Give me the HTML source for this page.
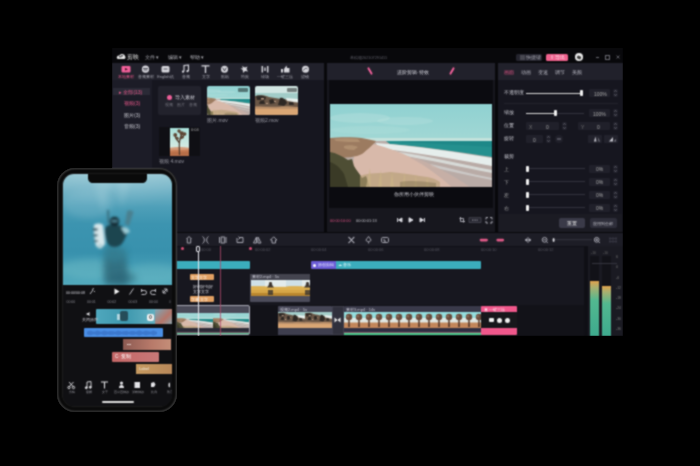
<!DOCTYPE html>
<html><head><meta charset="utf-8">
<style>
html,body{margin:0;padding:0;background:#000;width:700px;height:466px;overflow:hidden;font-family:"Liberation Sans",sans-serif;}
.a{position:absolute;}
.t{position:absolute;color:#b8b8c2;font-size:5px;line-height:6px;white-space:nowrap;}
svg{position:absolute;overflow:hidden}
#root{position:absolute;left:0;top:0;width:700px;height:466px;filter:url(#gblur)}
</style></head><body><svg width="0" height="0" style="position:absolute"><filter id="gblur" x="-1%" y="-1%" width="102%" height="102%" color-interpolation-filters="sRGB"><feConvolveMatrix order="3" kernelMatrix="1 2 1 2 6 2 1 2 1" preserveAlpha="true"/></filter></svg><div id="root">

<svg width="0" height="0" style="position:absolute">
 <defs>
  <linearGradient id="sky1" x1="0" y1="0" x2="0" y2="1">
   <stop offset="0" stop-color="#8fd1d1"/><stop offset=".6" stop-color="#a9dad6"/><stop offset="1" stop-color="#c4e4de"/>
  </linearGradient>
  <symbol id="beach" viewBox="0 0 162 83" preserveAspectRatio="none">
   <rect width="162" height="83" fill="url(#sky1)"/>
   <ellipse cx="30" cy="14" rx="30" ry="5" fill="#d8eeea" opacity=".22"/><ellipse cx="75" cy="17" rx="28" ry="4" fill="#d8eeea" opacity=".18"/><ellipse cx="40" cy="26" rx="40" ry="4" fill="#d8eeea" opacity=".12"/>
   <path d="M0 34 L162 34 L162 37 L0 37Z" fill="#c4e2dc"/>
   <path d="M44 37 L162 37 L162 83 L0 83 L0 37Z" fill="#b9aba6"/>
   <path d="M56 37 L162 37 L162 53 C135 49 100 43 60 40Z" fill="#24908e"/>
   <path d="M70 37 L162 37 L162 43 C130 41 100 39 72 38Z" fill="#1c8486" opacity=".7"/>
   <path d="M46 39 C90 42 130 49 162 54 L162 62 C130 56 95 50 48 44Z" fill="#e6eeec"/>
   <path d="M62 47 C100 52 130 60 162 66 L162 69 C130 63 100 56 64 50Z" fill="#dfe6e4" opacity=".8"/>
   <path d="M100 60 C120 64 140 70 162 74 L162 76 C140 72 120 67 102 63Z" fill="#d8dedd" opacity=".6"/>
   <path d="M44 40 C58 44 70 48 82 54 C96 62 110 72 122 83 L20 83 L24 52Z" fill="#d8b9aa"/><path d="M80 54 C96 62 110 72 122 83 L140 83 C124 72 106 62 86 54Z" fill="#c9b0a6" opacity=".8"/>
   <path d="M0 34 C8 33 18 33 26 33.5 C34 34 40 35.5 46 37 C44 40 38 45 32 50 C26 53 18 54 0 54Z" fill="#9c7b60"/>
   <path d="M4 35 C12 34 20 34 28 35 L30 38 C22 38 14 38 6 37Z M14 42 C18 41 24 41 28 43 L24 46 C20 46 16 45 14 44Z" fill="#b89878" opacity=".7"/>
   <path d="M0 48 C6 49 12 52 18 56 L22 55 L24 62 C26 66 30 70 32 74 L36 72 L40 83 L0 83Z" fill="#4e4e34"/>
   <path d="M0 58 C6 60 10 64 14 70 L18 83 L0 83Z" fill="#3a3a26"/>
   <path d="M30 72 C40 68 50 70 60 68 C70 69 80 70 90 72 C100 73 106 75 110 78 L110 83 L30 83Z" fill="#b49c72" opacity=".6"/>
   <path d="M36 83 L40 64 L41 83Z M48 83 L51 66 L52 83Z M60 83 L62 68 L64 83Z M72 83 L75 68 L75 83Z M84 83 L86 70 L87 83Z M96 83 L97 72 L99 83Z" fill="#cbb488" opacity=".7"/>
   <path d="M70 78 C80 76 90 77 106 79 L106 83 L70 83Z" fill="#6a6040" opacity=".35"/>
  </symbol>
  <filter id="soft" x="-5%" y="-5%" width="110%" height="110%"><feGaussianBlur stdDeviation=".7"/></filter>
  <symbol id="rocks" viewBox="0 0 43 29" preserveAspectRatio="none">
   <rect width="43" height="29" fill="#d2e6e3"/>
   <rect y="7" width="43" height="6" fill="#a2ccc8"/>
   <path d="M0 17 L43 17 L43 29 L0 29Z" fill="#d9a674"/>
   <path d="M0 10 C5 9 10 9 14 11 C18 12 22 12 26 13 C32 13 36 15 43 16 L43 21 C36 21 30 20 24 21 C16 22 8 20 0 21Z" fill="#6a5646"/>
   <path d="M1 10 C5 9 9 10 11 11 L10 14 L2 14Z M25 12 C28 11 31 14 32 17 L29 20 L23 19Z M14 14 L18 13 L20 17 L15 18Z M5 15 L9 14 L10 18 L4 18Z M34 16 L38 16 L39 19 L34 19Z" fill="#2e2824"/>
   <path d="M6 12 h3 v1.5 h-3z M19 15 h2 v1 h-2z M11 17 h2 v1 h-2z" fill="#b89c86"/>
   <path d="M31 12 C35 12 39 13 43 13 L43 16.5 C38 16.5 35 15 32 15Z" fill="#eef4f2" opacity=".85"/>
   <path d="M0 20 C10 21 20 20 43 21 L43 23 L0 23Z" fill="#a88466" opacity=".6"/>
  </symbol>
  <symbol id="tree" viewBox="0 0 20 29" preserveAspectRatio="none">
   <defs><linearGradient id="tsky" x1="0" y1="0" x2="0" y2="1"><stop offset="0" stop-color="#a8e0da"/><stop offset="1" stop-color="#e8eee6"/></linearGradient></defs>
   <rect width="20" height="29" fill="url(#tsky)"/>
   <path d="M0 20 C6 19 14 19 20 20 L20 29 L0 29Z" fill="#d49a78"/><path d="M0 23 C6 22 14 23 20 22 L20 29 L0 29Z" fill="#c47a52"/>
   <path d="M0 25 C6 24 14 25 20 24 L20 29 L0 29Z" fill="#b06a44" opacity=".7"/>
   <g stroke="#4e3a2c" stroke-width="1.3" fill="none" stroke-linecap="round">
    <path d="M10 27 C10 22 9.5 18 10 14 C10.5 11 11 9 12 7"/>
    <path d="M10 15 C8 13 6 11 5.5 8"/>
    <path d="M11 11 C13 10 14.5 9 15 6.5"/>
    <path d="M12 7 C11 5 10 4 9.5 3"/>
   </g>
   <g fill="#5e4634">
    <circle cx="5.5" cy="7" r="2"/><circle cx="9.5" cy="3" r="1.8"/><circle cx="12.5" cy="5.5" r="2.2"/><circle cx="15.5" cy="6" r="1.8"/><circle cx="7.5" cy="10.5" r="1.6"/><circle cx="13" cy="9.5" r="1.5"/>
   </g>
  </symbol>
  <symbol id="desert" viewBox="0 0 37 16" preserveAspectRatio="none">
   <rect width="37" height="16" fill="#d6a646"/>
   <rect width="37" height="6.5" fill="#cfe0e6"/>
   <rect x="14" y="0" width="21" height="7.5" fill="#eef2f0" opacity=".65"/>
   <path d="M0 6.5 C10 5.5 20 7.5 37 7 L37 10 L0 10Z" fill="#ddb050"/>
   <path d="M0 13 L37 13 L37 16 L0 16Z" fill="#b8862e"/>
   <path d="M18.5 2 L20.5 2 L21.5 5.5 L23 7.5 L16 7.5 L17.5 5.5Z" fill="#3e3630"/>
   <path d="M17 10 h5 v5 h-5z" fill="#3a3430" opacity=".8"/>
  </symbol>
  <symbol id="trees" viewBox="0 0 10 16" preserveAspectRatio="none">
   <rect width="10" height="16" fill="#dfe8e4"/>
   <rect width="10" height="6" fill="#94dcdc"/>
   <rect y="10.5" width="10" height="5.5" fill="#c2865a"/>
   <path d="M4.3 7 L5.7 7 L6 15 L4 15Z" fill="#5e4032"/>
   <circle cx="5" cy="5" r="3.2" fill="#6a4a3a"/>
   <circle cx="3.8" cy="4.2" r="1.2" fill="#8a6a58"/>
  </symbol>
  <radialGradient id="uw" cx="0.5" cy="0" r="1">
   <stop offset="0" stop-color="#bfe3ea"/><stop offset=".45" stop-color="#6ab9cc"/><stop offset=".8" stop-color="#3d9db6"/><stop offset="1" stop-color="#56b0c2"/>
  </radialGradient>
  <linearGradient id="meter" x1="0" y1="0" x2="0" y2="1">
   <stop offset="0" stop-color="#e0a248"/><stop offset=".45" stop-color="#4fb796"/><stop offset="1" stop-color="#3aa88f"/>
  </linearGradient>
 </defs>
</svg>

<!-- ============ WINDOW ============ -->
<div class="a" style="left:112px;top:48px;width:511px;height:288px;background:#08080b;box-shadow:inset 0 .5px 0 #121216"></div>

<!-- title bar -->
<svg style="left:115.5px;top:53.3px" width="10" height="7" viewBox="0 0 10 7"><path d="M1 5.5 C0 3.5 2 2 3.5 2.5 C4.5 .3 8.5 .5 9 3 C10 4.5 9.5 6 8 6 L2 6Z" fill="#e8e8e8"/><path d="M3 3.8 h2.5 M5 2.8 h2" stroke="#08080b" stroke-width=".9"/></svg>
<div class="t" style="left:127px;top:54px;color:#e0e0e0;font-size:6px">剪映</div>
<div class="t" style="left:145px;top:54px;color:#b0b0b8">文件 ▾</div>
<div class="t" style="left:168px;top:54px;color:#b0b0b8">编辑 ▾</div>
<div class="t" style="left:190px;top:54px;color:#b0b0b8">帮助 ▾</div>
<div class="t" style="left:350px;top:55px;color:#5e5e68;font-size:3.8px">草稿箱202107291411</div>
<div class="a" style="left:516px;top:53.7px;width:26px;height:7.7px;background:#24242e;border-radius:1.5px"></div>
<div class="t" style="left:520px;top:54.5px;color:#a0a0aa;font-size:4.5px">▤ 快捷键</div>
<div class="a" style="left:546.2px;top:53.7px;width:21.5px;height:7.7px;background:#f0628e;border-radius:1.5px"></div>
<div class="t" style="left:550px;top:54.5px;color:#ffe6ee;font-size:4.5px">⇧ 导出</div>
<div class="a" style="left:574.8px;top:53px;width:8.2px;height:8.2px;background:#ececec;border-radius:50%"></div>
<div class="a" style="left:576.8px;top:55.5px;width:4px;height:3px;background:#3a3a3a;border-radius:1px;transform:rotate(25deg)"></div>
<div class="a" style="left:595.5px;top:57px;width:3px;height:.8px;background:#6a6a72"></div>
<div class="a" style="left:605.3px;top:55.3px;width:2.4px;height:2.4px;border:.8px solid #6a6a72"></div>
<svg style="left:615.5px;top:55px" width="4" height="4" viewBox="0 0 4 4"><path d="M.5 .5 L3.5 3.5 M3.5 .5 L.5 3.5" stroke="#6a6a72" stroke-width=".8"/></svg>

<!-- ============ MEDIA PANEL ============ -->
<div class="a" style="left:112px;top:63px;width:212px;height:169px;background:#16161f"></div>
<div class="a" style="left:112px;top:63px;width:212px;height:17px;background:#21212b"></div>
<div class="a" style="left:112px;top:80px;width:40px;height:152px;background:#1c1c27"></div>
<!-- toolbar icons -->
<svg style="left:112px;top:63px" width="212" height="17" viewBox="0 0 212 17">
 <g fill="none" stroke="#dcdce2" stroke-width="1.1">
  <rect x="9.5" y="3" width="9" height="6.5" rx="1" fill="#f2609a" stroke="none"/>
  <path d="M13 5 L16 6.2 L13 7.5Z" fill="#3a1020" stroke="none"/>
  <circle cx="33.5" cy="6.2" r="3.6" fill="#d6d6dc" stroke="none"/>
  <path d="M31 5.5h5 M31.5 7h4" stroke="#33333d" stroke-width=".8"/>
  <rect x="49.5" y="3" width="8" height="6.5" rx="1.5" fill="#d6d6dc" stroke="none"/>
  <path d="M51.5 6 h4" stroke="#33333d" stroke-width=".8"/>
  <path d="M72 8.5 V2.5 L76.5 2 V8" /><circle cx="71" cy="8.7" r="1.1" fill="#dcdce2" stroke="none"/><circle cx="75.5" cy="8.2" r="1.1" fill="#dcdce2" stroke="none"/>
  <path d="M89.5 2.8 h8 M93.5 2.8 V10" stroke-width="1.3"/>
  <circle cx="112.5" cy="6.3" r="3.5" fill="#d6d6dc" stroke="none"/><path d="M110.8 4.8 L112.5 8 L114.2 4.8" stroke="#33333d" stroke-width=".9"/>
  <path d="M130 3 L133 4.5 L135.5 3.5 L134.5 6 L136 8.5 L133 8 L131 10 L130.8 7 L128.5 5.5 L131 5.2Z" fill="#d6d6dc" stroke="none"/>
  <path d="M150.3 3 V9.5 M155.7 3 V9.5" stroke-width="1.4"/><rect x="152.3" y="4.5" width="1.4" height="3.5" fill="#d6d6dc" stroke="none"/>
  <path d="M169 6 h2 v3.5 h-2z M172 6 L174.5 2.5 L175 5 h2.5 v4.5 h-5.5z" fill="#d6d6dc" stroke="none"/>
  <circle cx="193.5" cy="6.2" r="3.5" fill="#d6d6dc" stroke="none"/><path d="M191.5 7.5 C192.5 5 194.5 5 195.5 6" stroke="#33333d" stroke-width=".8"/>
 </g>
 <g font-size="3.8" fill="#a4a4ae" text-anchor="middle" font-family="Liberation Sans">
  <text x="14" y="15" fill="#e8588a">本地素材</text>
  <text x="33.5" y="15">音频素材</text>
  <text x="53.5" y="15">English机</text>
  <text x="73.5" y="15">音频</text>
  <text x="93.5" y="15">文字</text>
  <text x="112.5" y="15">贴纸</text>
  <text x="132.5" y="15">特效</text>
  <text x="153" y="15">转场</text>
  <text x="173" y="15">一键三连</text>
  <text x="193" y="15">滤镜</text>
 </g>
</svg>

<div class="a" style="left:113px;top:88px;width:37px;height:7px;background:#2a2a36"></div>
<div class="t" style="left:119px;top:89px;color:#e8588a">▸ 全部(13)</div>
<div class="t" style="left:124px;top:100px;color:#e8588a">视频(3)</div>
<div class="t" style="left:124px;top:112px;color:#c8c8d0">图片(3)</div>
<div class="t" style="left:124px;top:123px;color:#c8c8d0">音频(3)</div>

<!-- import box -->
<div class="a" style="left:158px;top:86px;width:43px;height:29px;background:#22222c;border-radius:2px"></div>
<div class="a" style="left:167px;top:95px;width:5px;height:5px;background:#f0609a;border-radius:50%"></div>
<div class="t" style="left:174.5px;top:94.5px;color:#d6d6de;font-size:4.6px">导入素材</div>
<div class="t" style="left:165px;top:102px;color:#74747e;font-size:4px;word-spacing:3px">视频 图片 音频</div>

<!-- thumbs -->
<svg style="left:206.5px;top:86px;border-radius:2px" width="43" height="29"><use href="#beach" x="-7" width="57" height="29"/></svg>
<div class="a" style="left:238px;top:88px;width:10px;height:4px;background:rgba(0,0,0,.45);border-radius:1px"></div>
<div class="t" style="left:207px;top:117px;color:#9a9aa4">图片.mov</div>
<svg style="left:255px;top:86px;border-radius:2px" width="43" height="29"><use href="#rocks" width="43" height="29"/></svg>
<div class="a" style="left:287px;top:88px;width:10px;height:4px;background:rgba(0,0,0,.45);border-radius:1px"></div>
<div class="t" style="left:255px;top:117px;color:#9a9aa4">视频2.mov</div>
<div class="a" style="left:159px;top:127px;width:41px;height:29px;background:#0f0f14"></div>
<svg style="left:170px;top:127.5px" width="19" height="28.5"><use href="#tree" width="19" height="28.5"/></svg>
<div class="t" style="left:191px;top:127px;color:#aaa;font-size:4px">0:04</div>
<div class="t" style="left:159px;top:158px;color:#9a9aa4">视频 4.mov</div>

<!-- ============ PREVIEW PANEL ============ -->
<div class="a" style="left:327px;top:63px;width:168px;height:169px;background:#17171e"></div>
<div class="a" style="left:327px;top:63px;width:168px;height:17px;background:#21212b"></div>
<div class="a" style="left:369px;top:67px;width:2px;height:8px;background:#f0609a;transform:rotate(-30deg);border-radius:1px"></div>
<div class="a" style="left:451px;top:67px;width:2px;height:8px;background:#f0609a;transform:rotate(30deg);border-radius:1px"></div>
<div class="t" style="left:397px;top:69px;color:#d8d8e0">进阶剪辑·特效</div>
<div class="a" style="left:329px;top:80px;width:164px;height:128px;background:#0b0b10"></div>
<svg style="left:330px;top:104px" width="162" height="83"><use href="#beach" width="162" height="83"/></svg>
<div class="t" style="left:394px;top:191px;color:#d0d0d8">你所用小伙伴剪映</div>
<div class="t" style="left:330px;top:217.5px;color:#d85080;font-size:3.9px">00:00:10:00</div>
<div class="t" style="left:356px;top:217.5px;color:#c0c0c8;font-size:3.9px">00:00:01:13</div>
<svg style="left:396px;top:216px" width="30" height="8" viewBox="0 0 30 8"><path d="M1.5 2v4 M6 2 L2.5 4 L6 6Z M13 1.8 L17 4 L13 6.2Z M24 2 L27.5 4 L24 6Z M28.5 2v4" stroke="#e0e0e6" stroke-width=".9" fill="#e0e0e6"/></svg>
<svg style="left:457px;top:216px" width="36" height="8" viewBox="0 0 36 8"><path d="M2.5 2.5h4v4 M3.5 1v4.5h4.5" stroke="#c8c8d0" fill="none" stroke-width=".8"/><rect x="12" y="1.8" width="12" height="4.6" fill="#24242e" stroke="#5a5a66" stroke-width=".6"/><path d="M15 4.1h6" stroke="#8a8a94" stroke-width="1.2" stroke-dasharray="1 .6"/><path d="M29 3.5V1.5h2 M33 1.5h2v2 M35 5v2h-2 M31 7h-2V5" stroke="#c8c8d0" fill="none" stroke-width=".8"/></svg>

<!-- ============ RIGHT PANEL ============ -->
<div class="a" style="left:498px;top:63px;width:125px;height:169px;background:#16161f"></div>
<div class="a" style="left:498px;top:63px;width:125px;height:17px;background:#21212b"></div>
<div class="t" style="left:504px;top:69px;color:#e8588a">画面</div>
<div class="t" style="left:521px;top:69px">动画</div>
<div class="t" style="left:538px;top:69px">变速</div>
<div class="t" style="left:555px;top:69px">调节</div>
<div class="t" style="left:572px;top:69px">美颜</div>

<div class="t" style="left:504px;top:89.7px;color:#c8c8d0;font-size:4.5px">不透明度</div>
<div class="a" style="left:526px;top:93px;width:56px;height:1px;background:#d8d8d8"></div>
<div class="a" style="left:580px;top:90px;width:3px;height:6px;background:#f0f0f0;border-radius:1px"></div>
<div class="a" style="left:589px;top:89px;width:21px;height:8px;background:#20202a;border-radius:1px"></div>
<div class="t" style="left:594px;top:90.5px;color:#aaa">100%</div>
<svg style="left:613.0px;top:89.0px" width="5" height="8" viewBox="0 0 5 8"><rect x=".2" y=".2" width="4.6" height="3.6" fill="#22222c"/><rect x=".2" y="4.2" width="4.6" height="3.6" fill="#22222c"/><path d="M1.3 2.7 L2.5 1.4 L3.7 2.7 M1.3 5.3 L2.5 6.6 L3.7 5.3" stroke="#8a8a94" stroke-width=".6" fill="none"/></svg>
<div class="a" style="left:504px;top:103px;width:114px;height:1px;background:#22222c"></div>

<div class="t" style="left:504px;top:109.7px;color:#c8c8d0;font-size:4.5px">缩放</div>
<div class="a" style="left:526px;top:113px;width:30px;height:1px;background:#d8d8d8"></div>
<div class="a" style="left:556px;top:113px;width:28px;height:1px;background:#33333d"></div>
<div class="a" style="left:554px;top:110px;width:3px;height:6px;background:#f0f0f0;border-radius:1px"></div>
<div class="a" style="left:589px;top:109px;width:21px;height:8px;background:#20202a;border-radius:1px"></div>
<div class="t" style="left:593px;top:110.5px;color:#aaa">100%</div>
<svg style="left:613.0px;top:109.0px" width="5" height="8" viewBox="0 0 5 8"><rect x=".2" y=".2" width="4.6" height="3.6" fill="#22222c"/><rect x=".2" y="4.2" width="4.6" height="3.6" fill="#22222c"/><path d="M1.3 2.7 L2.5 1.4 L3.7 2.7 M1.3 5.3 L2.5 6.6 L3.7 5.3" stroke="#8a8a94" stroke-width=".6" fill="none"/></svg>

<div class="t" style="left:504px;top:122.7px;color:#c8c8d0;font-size:4.5px">位置</div>
<div class="a" style="left:526px;top:122px;width:33px;height:8px;background:#20202a;border-radius:1px"></div>
<div class="t" style="left:529px;top:123.5px;color:#777">X</div>
<div class="t" style="left:546px;top:123.5px;color:#aaa">0</div>
<svg style="left:562.0px;top:122.0px" width="5" height="8" viewBox="0 0 5 8"><rect x=".2" y=".2" width="4.6" height="3.6" fill="#22222c"/><rect x=".2" y="4.2" width="4.6" height="3.6" fill="#22222c"/><path d="M1.3 2.7 L2.5 1.4 L3.7 2.7 M1.3 5.3 L2.5 6.6 L3.7 5.3" stroke="#8a8a94" stroke-width=".6" fill="none"/></svg>
<div class="a" style="left:578px;top:122px;width:32px;height:8px;background:#20202a;border-radius:1px"></div>
<div class="t" style="left:581px;top:123.5px;color:#777">Y</div>
<div class="t" style="left:597px;top:123.5px;color:#aaa">0</div>
<svg style="left:613.0px;top:122.0px" width="5" height="8" viewBox="0 0 5 8"><rect x=".2" y=".2" width="4.6" height="3.6" fill="#22222c"/><rect x=".2" y="4.2" width="4.6" height="3.6" fill="#22222c"/><path d="M1.3 2.7 L2.5 1.4 L3.7 2.7 M1.3 5.3 L2.5 6.6 L3.7 5.3" stroke="#8a8a94" stroke-width=".6" fill="none"/></svg>

<div class="t" style="left:504px;top:135.7px;color:#c8c8d0;font-size:4.5px">旋转</div>
<div class="a" style="left:526px;top:135px;width:17px;height:8px;background:#20202a;border-radius:1px"></div>
<div class="t" style="left:533px;top:136.5px;color:#aaa">0</div>
<svg style="left:546.0px;top:135.0px" width="5" height="8" viewBox="0 0 5 8"><rect x=".2" y=".2" width="4.6" height="3.6" fill="#22222c"/><rect x=".2" y="4.2" width="4.6" height="3.6" fill="#22222c"/><path d="M1.3 2.7 L2.5 1.4 L3.7 2.7 M1.3 5.3 L2.5 6.6 L3.7 5.3" stroke="#8a8a94" stroke-width=".6" fill="none"/></svg>
<div class="a" style="left:555px;top:135px;width:8px;height:8px;background:#20202a;border-radius:50%"></div>
<div class="a" style="left:588px;top:135px;width:14px;height:8px;background:#22222c;border-radius:1px"></div>
<div class="a" style="left:604px;top:135px;width:14px;height:8px;background:#22222c;border-radius:1px"></div>
<svg style="left:555px;top:135px" width="63" height="8" viewBox="0 0 63 8">
 <path d="M2 4 h4" stroke="#9a9aa4" stroke-width=".8"/>
 <path d="M39 6.5 L40.5 1.5 L41.5 6.5Z" fill="#c8c8d0"/><path d="M42.5 1.5 L43.5 6.5 L45 6.5Z" fill="#7a7a84"/>
 <path d="M54 6.5 L58 2 V6.5Z" fill="#c8c8d0"/><path d="M58.5 6.5 L61 4 L61 6.5Z" fill="#7a7a84"/>
</svg>

<div class="t" style="left:504px;top:153.7px;color:#c8c8d0;font-size:4.5px">裁剪</div>
<div class="t" style="left:504px;top:166px;color:#aaa">上</div>
<div class="t" style="left:504px;top:179px;color:#aaa">下</div>
<div class="t" style="left:504px;top:192px;color:#aaa">左</div>
<div class="t" style="left:504px;top:205px;color:#aaa">右</div>
<div class="a" style="left:528px;top:168px;width:57px;height:1px;background:#33333d"></div>
<div class="a" style="left:528px;top:181px;width:57px;height:1px;background:#33333d"></div>
<div class="a" style="left:528px;top:194px;width:57px;height:1px;background:#33333d"></div>
<div class="a" style="left:528px;top:207px;width:57px;height:1px;background:#33333d"></div>
<div class="a" style="left:526px;top:165.5px;width:3px;height:6px;background:#f0f0f0;border-radius:1px"></div>
<div class="a" style="left:526px;top:178.5px;width:3px;height:6px;background:#f0f0f0;border-radius:1px"></div>
<div class="a" style="left:526px;top:191.5px;width:3px;height:6px;background:#f0f0f0;border-radius:1px"></div>
<div class="a" style="left:526px;top:204.5px;width:3px;height:6px;background:#f0f0f0;border-radius:1px"></div>
<div class="a" style="left:589px;top:164.5px;width:21px;height:8px;background:#20202a;border-radius:1px"></div>
<div class="a" style="left:589px;top:177.5px;width:21px;height:8px;background:#20202a;border-radius:1px"></div>
<div class="a" style="left:589px;top:190.5px;width:21px;height:8px;background:#20202a;border-radius:1px"></div>
<div class="a" style="left:589px;top:203.5px;width:21px;height:8px;background:#20202a;border-radius:1px"></div>
<div class="t" style="left:596px;top:166px;color:#aaa">0%</div>
<div class="t" style="left:596px;top:179px;color:#aaa">0%</div>
<div class="t" style="left:596px;top:192px;color:#aaa">0%</div>
<div class="t" style="left:596px;top:205px;color:#aaa">0%</div>
<svg style="left:613.0px;top:164.5px" width="5" height="8" viewBox="0 0 5 8"><rect x=".2" y=".2" width="4.6" height="3.6" fill="#22222c"/><rect x=".2" y="4.2" width="4.6" height="3.6" fill="#22222c"/><path d="M1.3 2.7 L2.5 1.4 L3.7 2.7 M1.3 5.3 L2.5 6.6 L3.7 5.3" stroke="#8a8a94" stroke-width=".6" fill="none"/></svg>
<svg style="left:613.0px;top:177.5px" width="5" height="8" viewBox="0 0 5 8"><rect x=".2" y=".2" width="4.6" height="3.6" fill="#22222c"/><rect x=".2" y="4.2" width="4.6" height="3.6" fill="#22222c"/><path d="M1.3 2.7 L2.5 1.4 L3.7 2.7 M1.3 5.3 L2.5 6.6 L3.7 5.3" stroke="#8a8a94" stroke-width=".6" fill="none"/></svg>
<svg style="left:613.0px;top:190.5px" width="5" height="8" viewBox="0 0 5 8"><rect x=".2" y=".2" width="4.6" height="3.6" fill="#22222c"/><rect x=".2" y="4.2" width="4.6" height="3.6" fill="#22222c"/><path d="M1.3 2.7 L2.5 1.4 L3.7 2.7 M1.3 5.3 L2.5 6.6 L3.7 5.3" stroke="#8a8a94" stroke-width=".6" fill="none"/></svg>
<svg style="left:613.0px;top:203.5px" width="5" height="8" viewBox="0 0 5 8"><rect x=".2" y=".2" width="4.6" height="3.6" fill="#22222c"/><rect x=".2" y="4.2" width="4.6" height="3.6" fill="#22222c"/><path d="M1.3 2.7 L2.5 1.4 L3.7 2.7 M1.3 5.3 L2.5 6.6 L3.7 5.3" stroke="#8a8a94" stroke-width=".6" fill="none"/></svg>
<div class="a" style="left:499px;top:213.5px;width:123px;height:18px;background:#1b1b23"></div>
<div class="a" style="left:559px;top:218px;width:26px;height:10px;background:#3a3a48;border-radius:2px"></div>
<div class="t" style="left:567px;top:220px;color:#ddd">重置</div>
<div class="a" style="left:590px;top:218px;width:27px;height:10px;background:#2e2e3a;border-radius:2px"></div>
<div class="t" style="left:592.5px;top:220.5px;color:#c4c4cc;font-size:4.3px">应用到全部</div>

<!-- ============ TIMELINE ============ -->
<div class="a" style="left:112px;top:233px;width:511px;height:103px;background:#17171f"></div>
<div class="a" style="left:112px;top:304.5px;width:472px;height:31.5px;background:#121218"></div>
<div class="a" style="left:112px;top:233px;width:511px;height:13px;background:#1d1d26"></div>
<div class="a" style="left:585px;top:246px;width:38px;height:90px;background:#1a1a22"></div>
<!-- timeline toolbar icons -->
<svg style="left:112px;top:233px" width="511" height="13" viewBox="0 0 511 13">
 <g fill="none" stroke="#a6a6b0" stroke-width="1">
  <path d="M74.5 6 L77 3.5 L79.5 6 M75.3 5.5 V10 H78.7 V5.5"/>
  <path d="M90.5 3.5 C93 5 93 9 90.5 10.5 M96.5 3.5 C94 5 94 9 96.5 10.5"/>
  <path d="M107.5 4 V10 M114 4 V10"/><rect x="109.3" y="4" width="3" height="6"/>
  <path d="M125 5 V9.5 H131 V4.5 H127.5"/><path d="M126.5 3.5 L128 5 L126.5 6.5" />
  <path d="M144.5 4 L141.5 10 H144.5Z M146 4 L149 10 H146Z"/>
  <path d="M158.5 7 L161.7 3.8 L164.9 7 L163.5 7 L163.5 10 L160 10 L160 7Z"/>
  <path d="M236.5 4 L239.4 7 L242.3 4 M236.5 10 L239.4 7.2 L242.3 10" stroke-width="1.1"/>
  <path d="M254 7 C254 9 259 9 259 7 L258 5.5 L256.6 3.5 L255 5.5Z M256.6 9 V10.5"/>
  <rect x="269.5" y="4.5" width="7" height="5" rx="1.2"/><path d="M272 6 V8 H274"/>
  <path d="M413 7 L415 5.8 V8.2Z M419 7 L417 5.8 V8.2Z M416 4 V10" stroke-width=".8" fill="#cfcfd6"/>
  <circle cx="432.6" cy="6.8" r="2.4"/><path d="M434.4 8.6 L435.8 10 M431.4 6.8 h2.4"/>
  <circle cx="484.7" cy="6.8" r="2.4"/><path d="M486.5 8.6 L487.9 10 M483.5 6.8 h2.4 M484.7 5.6 v2.4"/>
  <path d="M498 4 V10 M501 4 V10 M504 4 V10 M497 5.5 H505 M497 8.5 H505" stroke="#3a3a46" stroke-width=".8"/>
 </g>
 <rect x="443" y="6.4" width="37" height=".7" fill="#3c3c48"/>
 <ellipse cx="441.6" cy="7" rx="1" ry="2.1" fill="#e8e8ec"/>
 <g fill="#e25a88">
  <rect x="367.7" y="5.8" width="8.2" height="2.6" rx="1.3"/>
  <rect x="384.4" y="5.8" width="7.7" height="2.6" rx="1.3"/>
 </g>
</svg>
<!-- ruler -->
<div class="a" style="left:112px;top:246px;width:473px;height:1px;background:#101016"></div>
<div class="a" style="left:180.5px;top:246.5px;width:3px;height:3px;background:#e0507a;border-radius:50%"></div>
<div class="a" style="left:248.5px;top:246.5px;width:3px;height:3px;background:#e0507a;border-radius:50%"></div>
<div class="t" style="left:201px;top:246.5px;color:#55555f;font-size:4px">00:00</div>
<div class="t" style="left:255px;top:246.5px;color:#55555f;font-size:4px">00:00:02</div>
<div class="t" style="left:311px;top:246.5px;color:#55555f;font-size:4px">00:00:04</div>
<div class="t" style="left:368px;top:246.5px;color:#55555f;font-size:4px">00:00:06</div>
<div class="t" style="left:424px;top:246.5px;color:#55555f;font-size:4px">00:00:08</div>
<div class="t" style="left:481px;top:246.5px;color:#55555f;font-size:4px">00:00:10</div>
<div class="t" style="left:538px;top:246.5px;color:#55555f;font-size:4px">00:00:12</div>

<!-- sticker/text track -->
<div class="a" style="left:150px;top:261px;width:100px;height:8px;background:#3badbd;border-radius:1px"></div>
<div class="a" style="left:310.5px;top:261px;width:25px;height:8px;background:#6a5bd6;border-radius:1px 0 0 1px"></div>
<div class="a" style="left:313px;top:263.5px;width:3px;height:3px;background:#fff;border-radius:50%"></div>
<div class="t" style="left:318px;top:262px;color:#e8e8ff;font-size:4px">原创剪辑</div>
<div class="a" style="left:335.5px;top:261px;width:145.5px;height:8px;background:#3badbd;border-radius:0 1px 1px 0"></div>
<div class="t" style="left:338px;top:262px;color:#e0f6f8;font-size:4px">☁ 音乐</div>

<!-- text labels -->
<div class="a" style="left:189.5px;top:274px;width:24px;height:6px;background:#e2a062;border-radius:1px"></div>
<div class="t" style="left:191px;top:274.5px;color:#fff3e6;font-size:4px">文字文字</div>
<div class="t" style="left:193px;top:283.5px;color:#d8d8e0;font-size:4px;line-height:5px">好词好句好<br>文字文字</div>
<div class="a" style="left:189.5px;top:296px;width:24px;height:6px;background:#e2a062;border-radius:1px"></div>
<div class="t" style="left:191px;top:296.5px;color:#fff3e6;font-size:4px">字幕 文字</div>

<!-- desert clip -->
<div class="a" style="left:250px;top:273.7px;width:60px;height:28.3px;background:#4c4c5a;border-radius:1px"></div>
<div class="a" style="left:250px;top:273.7px;width:60px;height:6px;background:#44444f"></div>
<div class="t" style="left:252px;top:274px;color:#c8c8d4;font-size:4px">素材2.mp4 · 5s</div>
<svg style="left:250.5px;top:279.7px" width="59" height="16"><use href="#desert" x="0" width="37" height="16"/><use href="#desert" x="37" width="37" height="16"/></svg>

<!-- main track clip1 -->
<div class="a" style="left:150px;top:305px;width:100px;height:30px;background:#4a4a58;border:1px solid #a8a8b4;border-radius:2px;box-sizing:border-box"></div>
<svg style="left:151px;top:312.5px" width="98" height="15.5"><use href="#beach" x="-12" y="-2" width="37" height="18"/><use href="#beach" x="25" y="-2" width="37" height="18"/><use href="#beach" x="62" y="-2" width="37" height="18"/></svg>
<div class="a" style="left:151px;top:328px;width:98px;height:6px;background:#2a2a36"></div>
<div class="a" style="left:151px;top:331.5px;width:98px;height:1px;background:#7a5a6a"></div><div class="a" style="left:151px;top:332.5px;width:98px;height:1.8px;background:#4cc88e"></div>

<!-- clip2 -->
<div class="a" style="left:278px;top:306px;width:54px;height:28.5px;background:#464656;border-radius:1px"></div>
<div class="t" style="left:280px;top:306.5px;color:#c8c8d4;font-size:4px">视频2.mp4 · 5s</div>
<svg style="left:278px;top:312px" width="54" height="16"><use href="#rocks" x="0" y="-7" width="27" height="24"/><use href="#rocks" x="27" y="-7" width="27" height="24"/></svg>
<div class="a" style="left:278px;top:328px;width:54px;height:6.5px;background:#3e3e4e"></div>

<!-- transition -->
<div class="a" style="left:332px;top:306px;width:11.5px;height:28.5px;background:#30303c;box-shadow:inset 0 0 0 .6px #4a4a58"></div>
<svg style="left:334px;top:317px" width="7" height="6" viewBox="0 0 7 6"><path d="M0.5 0.5 L3.5 3 L0.5 5.5Z M6.5 0.5 L3.5 3 L6.5 5.5Z" fill="#f0f0f0"/></svg>

<!-- clip3 -->
<div class="a" style="left:343.5px;top:306px;width:138px;height:28.5px;background:#3a3a4a;border-radius:1px"></div>
<div class="t" style="left:346px;top:306.5px;color:#c8c8d4;font-size:4px">素材3.mp4 · 14s</div>
<svg style="left:343.5px;top:312px" width="138" height="16"><use href="#trees" x="0" width="10" height="16"/><use href="#trees" x="10" width="10" height="16"/><use href="#trees" x="20" width="10" height="16"/><use href="#trees" x="30" width="10" height="16"/><use href="#trees" x="40" width="10" height="16"/><use href="#trees" x="50" width="10" height="16"/><use href="#trees" x="60" width="10" height="16"/><use href="#trees" x="70" width="10" height="16"/><use href="#trees" x="80" width="10" height="16"/><use href="#trees" x="90" width="10" height="16"/><use href="#trees" x="100" width="10" height="16"/><use href="#trees" x="110" width="10" height="16"/><use href="#trees" x="120" width="10" height="16"/><use href="#trees" x="130" width="10" height="16"/></svg>
<div class="a" style="left:343.5px;top:328px;width:138px;height:7px;background:#2e2e42"></div>
<div class="a" style="left:343.5px;top:331.5px;width:138px;height:1px;background:#8a5a6a"></div>
<div class="a" style="left:343.5px;top:332.5px;width:138px;height:2.5px;background:#4ccc8e"></div>

<!-- pink clip -->
<div class="a" style="left:481px;top:306px;width:36px;height:29px;background:#f0578b;border-radius:1px"></div>
<div class="a" style="left:481px;top:312px;width:36px;height:16px;background:#17171b"></div>
<div class="t" style="left:484px;top:306.5px;color:#ffe8f0;font-size:4px">▣ 一键三连</div>
<div class="a" style="left:488.5px;top:318px;width:5px;height:4px;background:#f2f2f2;border-radius:1px"></div>
<div class="a" style="left:496.5px;top:317.5px;width:5px;height:5px;background:#f2f2f2;border-radius:50%"></div>
<div class="a" style="left:504.5px;top:317.5px;width:5px;height:5px;background:#f2f2f2;border-radius:50%"></div>

<!-- playhead -->
<div class="a" style="left:220px;top:246px;width:1px;height:90px;background:#b24a6c;opacity:.8"></div>
<div class="a" style="left:198px;top:250px;width:1px;height:86px;background:#e8e8ee"></div>
<div class="a" style="left:196px;top:246px;width:4px;height:6px;border:1px solid #e8e8ee;border-radius:1px;box-sizing:border-box;background:#1d1d26"></div>

<!-- meters -->
<div class="a" style="left:584px;top:246px;width:4px;height:90px;background:#0f0f15"></div>
<div class="a" style="left:590px;top:256px;width:9px;height:80px;background:#121218"></div><div class="a" style="left:601.5px;top:256px;width:9px;height:80px;background:#121218"></div><div class="a" style="left:592px;top:263px;width:25px;height:.6px;background:#34343e"></div>
<div class="a" style="left:590px;top:280.5px;width:9px;height:55px;background:linear-gradient(#e0a24c,#a8b070 12%,#52b890 35%,#3eaa8e)"></div>
<div class="a" style="left:601.5px;top:286px;width:9px;height:49.5px;background:linear-gradient(#e0a24c,#a8b070 12%,#52b890 35%,#3eaa8e)"></div>
<div class="t" style="left:591px;top:250px;color:#666;font-size:3.5px">-10</div>
<div class="t" style="left:603px;top:250px;color:#666;font-size:3.5px">-10</div>
<div class="t" style="left:616px;top:252px;color:#777;font-size:3.5px;line-height:10.3px">6<br>0<br>-6<br>-12<br>-18<br>-24<br>-30<br>-36</div>



<!-- ============ PHONE ============ -->
<div class="a" style="left:57.3px;top:167.7px;width:119.4px;height:244.8px;border-radius:18px;background:#0a0a0a;box-shadow:inset 0 0 0 1px #424242, inset 0 0 0 1.8px #1a1a1a, inset 0 0 0 5px #0a0a0a, inset 0 0 0 5.8px #222"></div>
<div class="a" style="left:63px;top:173.5px;width:108.5px;height:232px;border-radius:11px;background:#101013;overflow:hidden">
 <svg style="left:0;top:0" width="109" height="111" viewBox="0 0 109 111">
  <defs>
   <linearGradient id="uwg" x1="0" y1="0" x2="0" y2="1">
    <stop offset="0" stop-color="#98c8d4"/><stop offset=".12" stop-color="#7cb8ca"/><stop offset=".3" stop-color="#4e9fb8"/><stop offset=".45" stop-color="#3c94b0"/><stop offset=".7" stop-color="#3891ad"/><stop offset=".85" stop-color="#449db5"/><stop offset="1" stop-color="#52a9bc"/>
   </linearGradient>
   <radialGradient id="uwr" cx="0.5" cy="0" r="0.6">
    <stop offset="0" stop-color="#d0e8ee" stop-opacity=".15"/><stop offset="1" stop-color="#d0e8ee" stop-opacity="0"/>
   </radialGradient>
   <filter id="bl1" x="-50%" y="-50%" width="200%" height="200%"><feGaussianBlur stdDeviation="1.1"/></filter>
   <filter id="bl2" x="-50%" y="-50%" width="200%" height="200%"><feGaussianBlur stdDeviation="3"/></filter>
  </defs>
  <rect width="109" height="111" fill="url(#uwg)"/>
  <rect width="109" height="60" fill="url(#uwr)"/>
  <ellipse cx="30" cy="95" rx="35" ry="10" fill="#80c8cc" opacity=".35" filter="url(#bl2)"/><ellipse cx="90" cy="100" rx="30" ry="10" fill="#80c8cc" opacity=".3" filter="url(#bl2)"/><ellipse cx="25" cy="30" rx="25" ry="14" fill="#a8d2de" opacity=".2" filter="url(#bl2)"/><path d="M44 74 C50 72 58 74 62 78 C64 90 66 100 64 111 L42 111 C40 100 40 86 44 74Z" fill="#2a6474" opacity=".8" filter="url(#bl2)"/><ellipse cx="60" cy="104" rx="14" ry="6" fill="#2a6474" opacity=".5" filter="url(#bl2)"/><path d="M30 6 L40 40 L48 6Z M55 4 L58 36 L68 4Z" fill="#c8e4ea" opacity=".18" filter="url(#bl2)"/>
  <ellipse cx="52" cy="80" rx="12" ry="8" fill="#3a8ea2" opacity=".5" filter="url(#bl2)"/>
  <g filter="url(#bl1)">
   <path d="M42 56 C42 51 47 50 52 51 C58 51 63 53 65 58 L63 62 C61 66 60 70 56 72 C52 74 47 73 45 70 C43 66 42 61 42 56Z" fill="#1c4450"/>
   <path d="M58 54 C62 52 66 54 67 58 L62 60Z" fill="#9ccad4"/>
   <circle cx="51.5" cy="47.5" r="4.8" fill="#142e38"/>
   <path d="M48.5 46 h6 v2.2 h-6z" fill="#4e8494"/>
   <path d="M62 50 L64 37 C66 35.5 69 36 70.5 38 L66 52Z" fill="#4a8090"/>
   <path d="M44 36 L46 36 L46.5 50 L44.5 50Z" fill="#3a7080"/>
   <path d="M31 51 C33 49 38 49 40 51 L42 69 C42 73 36 75 33 72 L31 61Z" fill="#d8e8ec"/>
   <path d="M30 54 h4.5 v3 h-4.5z M30.5 60 h4 v2.5 h-4z M31 66 h4 v2 h-4z" fill="#2a5a68"/>
   <circle cx="37" cy="72" r="2.6" fill="#b8d4da"/>
  </g>
  <path d="M25 0 H84 V4 C84 7 82 9 79 9 H30 C27 9 25 7 25 4Z" fill="#0a0a0a"/>
 </svg>
</div>
<!-- phone UI -->
<div class="t" style="left:66px;top:289.5px;color:#d0d0d8;font-size:3.6px">00:00/00:08</div>
<svg style="left:63px;top:287px" width="109" height="10" viewBox="0 0 109 10">
 <g stroke="#d0d0d6" stroke-width=".9" fill="none">
  <path d="M27 7 L30 3 M29 2.5 L31 1.5 M31 4 L32 5"/>
  <path d="M51.5 1.5 L56.5 4.5 L51.5 7.5Z" fill="#f4f4f4" stroke="none"/>
  <path d="M66.5 7.5 L70.5 1.5"/>
  <path d="M78.5 3.5 h3 a2 2 0 0 1 0 4 h-3 M78.5 2 v3"/>
  <path d="M92.5 3.5 h-3 a2 2 0 0 0 0 4 h3 M92.5 2 v3"/>
  <path d="M100 6 L104 2 M100 3 v3 h3 M104 5 v-3 h-3"/>
 </g>
</svg>
<div class="t" style="left:66.5px;top:298.5px;color:#85858d;font-size:3.5px">00:00</div><div class="t" style="left:87px;top:298.5px;color:#85858d;font-size:3.5px">00:01</div><div class="t" style="left:107.5px;top:298.5px;color:#85858d;font-size:3.5px">00:02</div><div class="t" style="left:128.5px;top:298.5px;color:#85858d;font-size:3.5px">00:03</div><div class="t" style="left:149px;top:298.5px;color:#85858d;font-size:3.5px">00:04</div><div class="t" style="left:169px;top:298.5px;color:#6a6a72;font-size:3.5px">0</div>
<!-- phone clip -->
<div class="a" style="left:96.3px;top:308.7px;width:75.2px;height:15.4px;background:linear-gradient(90deg,#4fa7bd,#3e98ae 40%,#5aaabc 70%,#6eb2c2);border-radius:1px 0 0 1px"></div>
<div class="a" style="left:120px;top:311px;width:8px;height:10px;background:#1f3a44;border-radius:2px;opacity:.8"></div>
<div class="a" style="left:117px;top:314px;width:3px;height:6px;background:#dfeef2;opacity:.7"></div>
<div class="a" style="left:155px;top:309px;width:16.5px;height:15px;background:linear-gradient(135deg,#7aa8b8,#b5766a 60%,#8aa0a8)"></div>
<div class="a" style="left:146.6px;top:313.5px;width:7.5px;height:7px;background:#f4f4f4;border-radius:2px"></div>
<div class="a" style="left:148.6px;top:315.3px;width:3.5px;height:3.5px;border:.7px solid #444;border-radius:50%;box-sizing:border-box"></div>
<div class="t" style="left:86px;top:311px;color:#e6e6ea;font-size:4px">◀)</div>
<div class="t" style="left:82px;top:317px;color:#c8c8d0;font-size:3.5px">关闭原声</div>
<div class="a" style="left:84px;top:327.9px;width:79px;height:9.6px;background:#4a8fe6;border-radius:1px"></div>
<svg style="left:87px;top:329.7px" width="72" height="6" viewBox="0 0 72 6"><path d="M0 1.80 L1 1.36 L2 1.10 L3 0.78 L4 0.77 L5 1.26 L6 1.52 L7 1.79 L8 1.44 L9 1.17 L10 0.53 L11 0.87 L12 0.88 L13 1.40 L14 1.78 L15 1.46 L16 0.96 L17 0.61 L18 0.84 L19 0.93 L20 1.35 L21 1.78 L22 1.28 L23 0.97 L24 0.97 L25 1.15 L26 0.88 L27 1.41 L28 1.76 L29 1.23 L30 0.90 L31 0.57 L32 0.92 L33 0.91 L34 1.43 L35 1.75 L36 1.22 L37 1.22 L38 1.07 L39 1.04 L40 0.84 L41 1.44 L42 1.75 L43 1.39 L44 1.00 L45 0.91 L46 0.96 L47 1.03 L48 1.41 L49 1.73 L50 1.27 L51 0.77 L52 0.61 L53 0.56 L54 1.00 L55 1.52 L56 1.72 L57 1.17 L58 0.78 L59 0.79 L60 0.73 L61 1.22 L62 1.36 L63 1.72 L64 1.38 L65 1.23 L66 0.61 L67 0.57 L68 1.28 L69 1.38 L70 1.72 L70 4.28 L69 4.62 L68 4.72 L67 5.43 L66 5.39 L65 4.77 L64 4.62 L63 4.28 L62 4.64 L61 4.78 L60 5.27 L59 5.21 L58 5.22 L57 4.83 L56 4.28 L55 4.48 L54 5.00 L53 5.44 L52 5.39 L51 5.23 L50 4.73 L49 4.27 L48 4.59 L47 4.97 L46 5.04 L45 5.09 L44 5.00 L43 4.61 L42 4.25 L41 4.56 L40 5.16 L39 4.96 L38 4.93 L37 4.78 L36 4.78 L35 4.25 L34 4.57 L33 5.09 L32 5.08 L31 5.43 L30 5.10 L29 4.77 L28 4.24 L27 4.59 L26 5.12 L25 4.85 L24 5.03 L23 5.03 L22 4.72 L21 4.22 L20 4.65 L19 5.07 L18 5.16 L17 5.39 L16 5.04 L15 4.54 L14 4.22 L13 4.60 L12 5.12 L11 5.13 L10 5.47 L9 4.83 L8 4.56 L7 4.21 L6 4.48 L5 4.74 L4 5.23 L3 5.22 L2 4.90 L1 4.64 L0 4.20Z" fill="#3a74c8" opacity=".85"/></svg>
<div class="a" style="left:122.7px;top:339.3px;width:48.8px;height:10.3px;background:linear-gradient(90deg,#8c5a52,#b87a6a 60%,#c48e78)"></div>
<div class="t" style="left:127px;top:341.5px;color:#f4e8e4;font-size:4px">▪▪▪</div>
<div class="a" style="left:112px;top:351.7px;width:46.7px;height:9.9px;background:linear-gradient(90deg,#c46666,#c87878);border-radius:1px"></div>
<div class="t" style="left:115px;top:354px;color:#fff;font-size:4.5px">C· 复制</div>
<div class="a" style="left:136px;top:363.8px;width:35.5px;height:9.8px;background:linear-gradient(90deg,#c69a60,#b8885a)"></div>
<div class="t" style="left:139px;top:366px;color:#f4eadc;font-size:4px">Label</div>
<!-- phone toolbar -->
<svg style="left:63px;top:380px" width="109" height="14" viewBox="0 0 109 14">
 <g fill="#e4e4e8" stroke="#e4e4e8" stroke-width=".9">
  <path d="M6 2 L10.5 7 M10.5 2 L6 7" fill="none"/><circle cx="6" cy="7.5" r="1.2" fill="none"/><circle cx="10.5" cy="7.5" r="1.2" fill="none"/>
  <path d="M24 7.5 V2 L28 1.5 V7" fill="none"/><circle cx="23.3" cy="7.7" r="1"/><circle cx="27.3" cy="7.3" r="1"/>
  <path d="M38 2 h7 M41.5 2 V8.5" fill="none" stroke-width="1.1"/>
  <path d="M56 8 C56 6 57 5 58.5 5 C60 5 61 6 61 8Z M58.5 1.5 a1.6 1.6 0 1 1 0 3.2 a1.6 1.6 0 1 1 0 -3.2" stroke="none"/>
  <rect x="71.5" y="2" width="5.5" height="6" stroke="none"/>
  <path d="M88 3 L91 2 L92.5 4.5 L91 7 L88 7Z" stroke="none"/>
  <path d="M105.5 3.5 L107 2.5 V7.5 L105.5 6.5Z" stroke="none"/>
 </g>
 <g font-size="3" fill="#9a9aa2" text-anchor="middle" font-family="Liberation Sans">
  <text x="8.5" y="13">剪辑</text><text x="25.8" y="13">音频</text><text x="41.8" y="13">文字</text><text x="58.5" y="13">画中画特效</text><text x="75" y="13">滤镜特效</text><text x="91.4" y="13">比例</text><text x="107" y="13">背景</text>
 </g>
</svg>
<div class="a" style="left:101.5px;top:401.3px;width:32px;height:1.5px;background:#e0e0e0;border-radius:1px"></div>

</div></body></html>
